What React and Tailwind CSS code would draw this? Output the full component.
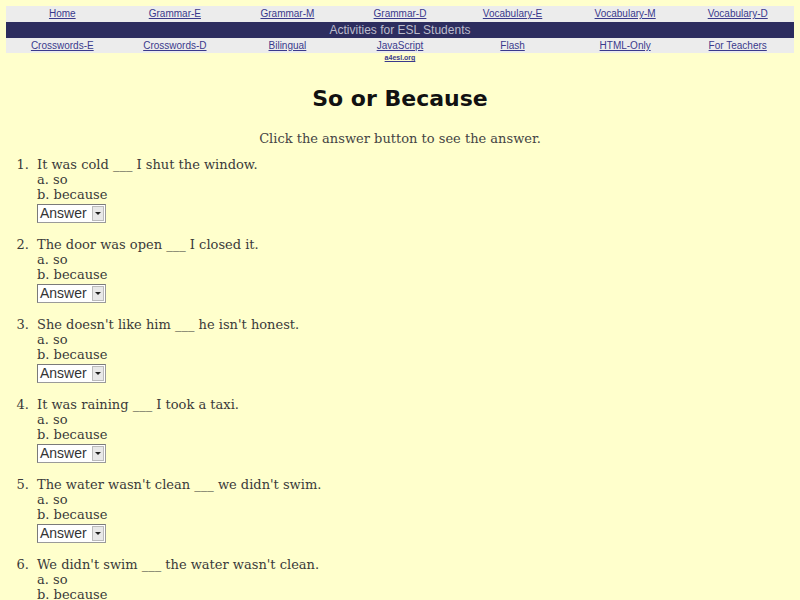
import React from "react";

const row1 = ["Home", "Grammar-E", "Grammar-M", "Grammar-D", "Vocabulary-E", "Vocabulary-M", "Vocabulary-D"];
const row3 = ["Crosswords-E", "Crosswords-D", "Bilingual", "JavaScript", "Flash", "HTML-Only", "For Teachers"];

const questions = [
  "It was cold ___ I shut the window.",
  "The door was open ___ I closed it.",
  "She doesn't like him ___ he isn't honest.",
  "It was raining ___ I took a taxi.",
  "The water wasn't clean ___ we didn't swim.",
  "We didn't swim ___ the water wasn't clean.",
];

function FakeSelect() {
  return (
    <div className="flex items-center w-[69px] h-[19px] bg-white border border-[#9a9a9a] border-t-[#7a7a7a] border-l-[#7a7a7a] mt-[2px]">
      <span className="flex-1 pl-[2px] text-[14px] leading-[17px] text-[#333] font-['Liberation_Sans',sans-serif]">Answer</span>
      <span className="w-[12px] h-[15px] mr-[1px] bg-[#e8e8e8] border border-[#bbb] flex items-center justify-center">
        <span className="block w-0 h-0 border-l-[3px] border-r-[3px] border-t-[3px] border-l-transparent border-r-transparent border-t-[#222]" />
      </span>
    </div>
  );
}

export default function App() {
  return (
    <div className="h-[600px] bg-[#ffffcc] pt-[6px] overflow-hidden font-['DejaVu_Serif',serif]">
      <div className="mx-[6px]">
        <div className="grid grid-cols-7 bg-[#ececec] h-[16px] items-center">
          {row1.map((t) => (
            <a key={t} className="text-center text-[10px] leading-[16px] text-[#3a3a8c] underline font-['Liberation_Sans',sans-serif]">{t}</a>
          ))}
        </div>
        <div className="bg-[#2d2d5f] h-[16px] text-center text-[12px] leading-[16px] text-[#bcbccc] font-['Liberation_Sans',sans-serif]">
          Activities for ESL Students
        </div>
        <div className="grid grid-cols-7 bg-[#ececec] h-[15px] items-center">
          {row3.map((t) => (
            <a key={t} className="text-center text-[10px] leading-[15px] text-[#3a3a8c] underline font-['Liberation_Sans',sans-serif]">{t}</a>
          ))}
        </div>
        <div className="grid grid-cols-7">
          <div className="col-start-4 text-center text-[7px] leading-[9px] font-bold text-[#3a3a8c] underline font-['Liberation_Sans',sans-serif]">a4esl.org</div>
        </div>
      </div>

      <h1 className="text-center mt-[22px] text-[22px] leading-[30px] font-bold text-[#111] font-['DejaVu_Sans',sans-serif]">So or Because</h1>
      <p className="text-center mt-[17px] text-[13px] leading-[16px] text-[#444]">Click the answer button to see the answer.</p>

      <ol className="mt-[10px] text-[13px] leading-[15px] text-[#3a3a3a]">
        {questions.map((q, i) => (
          <li key={i} className="flex h-[80px]">
            <span className="w-[37px] pr-[8px] text-right shrink-0">{i + 1}.</span>
            <div className="flex flex-col">
              <div>{q}</div>
              <div>a. so</div>
              <div>b. because</div>
              <FakeSelect />
            </div>
          </li>
        ))}
      </ol>
    </div>
  );
}
